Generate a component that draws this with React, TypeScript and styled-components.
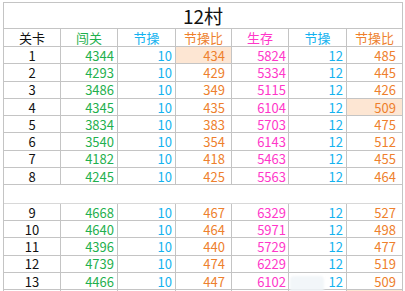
import styled, { createGlobalStyle } from 'styled-components';

const GlobalStyle = createGlobalStyle`
  html, body {
    margin: 0;
    padding: 0;
    background: #ffffff;
    overflow: hidden;
  }
`;

const GREEN = '#1fb04e';
const BLUE = '#14b2ef';
const ORANGE = '#ee7f2d';
const PINK = '#ff37c9';
const PEACH = '#fde6d3';
const LINE = '#c4c4c4';

const COLS = '57px 57px 58px 56px 57px 58px 56px';

const columns = [
  { title: '关卡', color: '#111111', pad: 0 },
  { title: '闯关', color: GREEN, pad: 3 },
  { title: '节操', color: BLUE, pad: 3 },
  { title: '节操比', color: ORANGE, pad: 6 },
  { title: '生存', color: PINK, pad: 2 },
  { title: '节操', color: BLUE, pad: 3 },
  { title: '节操比', color: ORANGE, pad: 6 },
];

// null marks the blank separator row
const rows: (number[] | null)[] = [
  [1, 4344, 10, 434, 5824, 12, 485],
  [2, 4293, 10, 429, 5334, 12, 445],
  [3, 3486, 10, 349, 5115, 12, 426],
  [4, 4345, 10, 435, 6104, 12, 509],
  [5, 3834, 10, 383, 5703, 12, 475],
  [6, 3540, 10, 354, 6143, 12, 512],
  [7, 4182, 10, 418, 5463, 12, 455],
  [8, 4245, 10, 425, 5563, 12, 464],
  null,
  [9, 4668, 10, 467, 6329, 12, 527],
  [10, 4640, 10, 464, 5971, 12, 498],
  [11, 4396, 10, 440, 5729, 12, 477],
  [12, 4739, 10, 474, 6229, 12, 519],
  [13, 4466, 10, 447, 6102, 12, 509],
];

// highlighted cells: "row-col"
const peach = new Set(['1-3', '4-6', '14-6']);

export default function App() {
  return (
    <>
      <GlobalStyle />
      <Page>
        <Sheet>
          <Title>12村</Title>
          <Row $h={18}>
            {columns.map((c, i) => (
              <Cell key={i} $color={c.color} $align="center">
                {c.title}
              </Cell>
            ))}
          </Row>
          {rows.map((r, ri) =>
            r === null ? (
              <BlankRow key={ri} />
            ) : (
              <Row key={ri} $h={17.3}>
                {r.map((v, ci) => (
                  <Cell
                    key={ci}
                    $color={columns[ci].color}
                    $align={ci === 0 ? 'center' : 'right'}
                    $pad={columns[ci].pad}
                    $bg={peach.has(`${r[0]}-${ci}`) ? PEACH : undefined}
                  >
                    {v}
                  </Cell>
                ))}
              </Row>
            )
          )}
          <Row $h={17.3}>
            {columns.map((_, ci) => (
              <Cell key={ci} $bg={peach.has(`14-${ci}`) ? PEACH : undefined} />
            ))}
          </Row>
        </Sheet>
        <Watermark />
      </Page>
    </>
  );
}

const Page = styled.div`
  position: relative;
  width: 405px;
  height: 291px;
  overflow: hidden;
  padding: 2px 0 0 3px;
  box-sizing: border-box;
  font-family: 'Noto Sans CJK SC', 'Liberation Sans', sans-serif;
`;

const Sheet = styled.div`
  width: 400px;
  border-left: 1px solid ${LINE};
  border-top: 1px solid ${LINE};
  box-sizing: border-box;
  display: flex;
  flex-direction: column;
`;

const Title = styled.div`
  height: 26px;
  box-sizing: border-box;
  border-right: 1px solid ${LINE};
  border-bottom: 1px solid ${LINE};
  display: flex;
  align-items: center;
  justify-content: center;
  font-size: 19px;
  line-height: 20px;
  color: #111111;
  padding-top: 1px;
  overflow: hidden;
`;

const Row = styled.div<{ $h: number }>`
  display: grid;
  grid-template-columns: ${COLS};
  height: ${(p) => p.$h}px;
  flex-shrink: 0;
`;

const BlankRow = styled.div`
  height: 18.5px;
  flex-shrink: 0;
  box-sizing: border-box;
  border-right: 1px solid ${LINE};
  border-bottom: 1px solid #d8d8d8;
`;

const Cell = styled.div<{
  $color?: string;
  $align?: 'center' | 'right';
  $pad?: number;
  $bg?: string;
}>`
  box-sizing: border-box;
  border-right: 1px solid ${LINE};
  border-bottom: 1px solid ${LINE};
  background: ${(p) => p.$bg ?? 'transparent'};
  color: ${(p) => p.$color ?? '#111111'};
  display: flex;
  align-items: center;
  justify-content: ${(p) => (p.$align === 'right' ? 'flex-end' : 'center')};
  padding-right: ${(p) => (p.$align === 'right' ? p.$pad ?? 3 : 0)}px;
  font-size: 13px;
  line-height: 1;
  white-space: nowrap;
`;

const Watermark = styled.div`
  position: absolute;
  left: 290px;
  top: 276px;
  width: 34px;
  height: 18px;
  border-radius: 4px;
  background: rgba(240, 244, 248, 0.85);
  filter: blur(1px);
`;
